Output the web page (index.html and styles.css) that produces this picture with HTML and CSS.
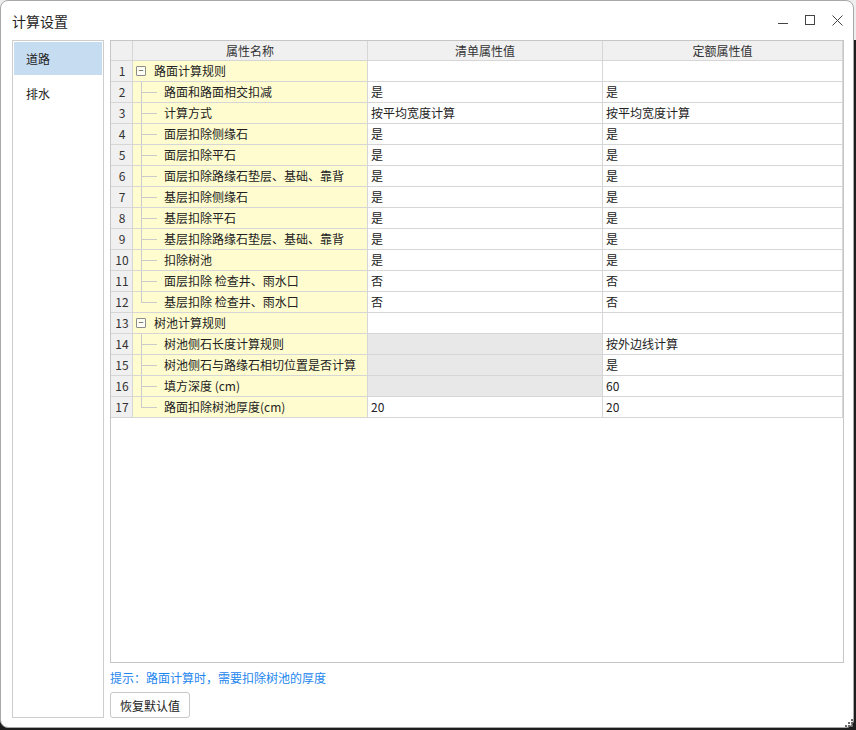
FILE: index.html
```html
<!DOCTYPE html>
<html lang="zh-CN">
<head>
<meta charset="utf-8">
<title>计算设置</title>
<link rel="stylesheet" href="styles.css">
</head>
<body>
<div class="window">
  <div class="titlebar">
    <span class="title">计算设置</span>
    <div class="controls">
      <svg class="ctl" width="10" height="10" viewBox="0 0 10 10"><line x1="0" y1="8.5" x2="10" y2="8.5" stroke="#444" stroke-width="1"/></svg>
      <svg class="ctl" width="10" height="10" viewBox="0 0 10 10"><rect x="0.5" y="0.5" width="9" height="9" fill="none" stroke="#444" stroke-width="1"/></svg>
      <svg class="ctl" width="11" height="11" viewBox="0 0 11 11"><path d="M0.5 0.5 L10.5 10.5 M10.5 0.5 L0.5 10.5" stroke="#444" stroke-width="1" fill="none"/></svg>
    </div>
  </div>
  <div class="content">
    <div class="sidebar">
      <div class="nav-item active">道路</div>
      <div class="nav-item">排水</div>
    </div>
    <div class="main">
      <div class="grid-box">
        <div class="row head">
          <div class="cell num"></div>
          <div class="cell hc">属性名称</div>
          <div class="cell hc">清单属性值</div>
          <div class="cell hc">定额属性值</div>
        </div>

        <div class="row">
          <div class="cell num">1</div>
          <div class="cell name"><span class="toggle">−</span><span class="gtext">路面计算规则</span></div>
          <div class="cell val"></div>
          <div class="cell val"></div>
        </div>
        <div class="row">
          <div class="cell num">2</div>
          <div class="cell name"><span class="branch"></span><span class="ctext">路面和路面相交扣减</span></div>
          <div class="cell val">是</div>
          <div class="cell val">是</div>
        </div>
        <div class="row">
          <div class="cell num">3</div>
          <div class="cell name"><span class="branch"></span><span class="ctext">计算方式</span></div>
          <div class="cell val">按平均宽度计算</div>
          <div class="cell val">按平均宽度计算</div>
        </div>
        <div class="row">
          <div class="cell num">4</div>
          <div class="cell name"><span class="branch"></span><span class="ctext">面层扣除侧缘石</span></div>
          <div class="cell val">是</div>
          <div class="cell val">是</div>
        </div>
        <div class="row">
          <div class="cell num">5</div>
          <div class="cell name"><span class="branch"></span><span class="ctext">面层扣除平石</span></div>
          <div class="cell val">是</div>
          <div class="cell val">是</div>
        </div>
        <div class="row">
          <div class="cell num">6</div>
          <div class="cell name"><span class="branch"></span><span class="ctext">面层扣除路缘石垫层、基础、靠背</span></div>
          <div class="cell val">是</div>
          <div class="cell val">是</div>
        </div>
        <div class="row">
          <div class="cell num">7</div>
          <div class="cell name"><span class="branch"></span><span class="ctext">基层扣除侧缘石</span></div>
          <div class="cell val">是</div>
          <div class="cell val">是</div>
        </div>
        <div class="row">
          <div class="cell num">8</div>
          <div class="cell name"><span class="branch"></span><span class="ctext">基层扣除平石</span></div>
          <div class="cell val">是</div>
          <div class="cell val">是</div>
        </div>
        <div class="row">
          <div class="cell num">9</div>
          <div class="cell name"><span class="branch"></span><span class="ctext">基层扣除路缘石垫层、基础、靠背</span></div>
          <div class="cell val">是</div>
          <div class="cell val">是</div>
        </div>
        <div class="row">
          <div class="cell num">10</div>
          <div class="cell name"><span class="branch"></span><span class="ctext">扣除树池</span></div>
          <div class="cell val">是</div>
          <div class="cell val">是</div>
        </div>
        <div class="row">
          <div class="cell num">11</div>
          <div class="cell name"><span class="branch"></span><span class="ctext">面层扣除 检查井、雨水口</span></div>
          <div class="cell val">否</div>
          <div class="cell val">否</div>
        </div>
        <div class="row">
          <div class="cell num">12</div>
          <div class="cell name"><span class="branch last"></span><span class="ctext">基层扣除 检查井、雨水口</span></div>
          <div class="cell val">否</div>
          <div class="cell val">否</div>
        </div>

        <div class="row">
          <div class="cell num">13</div>
          <div class="cell name"><span class="toggle">−</span><span class="gtext">树池计算规则</span></div>
          <div class="cell val"></div>
          <div class="cell val"></div>
        </div>
        <div class="row">
          <div class="cell num">14</div>
          <div class="cell name"><span class="branch"></span><span class="ctext">树池侧石长度计算规则</span></div>
          <div class="cell val disabled"></div>
          <div class="cell val">按外边线计算</div>
        </div>
        <div class="row">
          <div class="cell num">15</div>
          <div class="cell name"><span class="branch"></span><span class="ctext">树池侧石与路缘石相切位置是否计算</span></div>
          <div class="cell val disabled"></div>
          <div class="cell val">是</div>
        </div>
        <div class="row">
          <div class="cell num">16</div>
          <div class="cell name"><span class="branch"></span><span class="ctext">填方深度 (cm)</span></div>
          <div class="cell val disabled"></div>
          <div class="cell val">60</div>
        </div>
        <div class="row">
          <div class="cell num">17</div>
          <div class="cell name"><span class="branch last"></span><span class="ctext">路面扣除树池厚度(cm)</span></div>
          <div class="cell val">20</div>
          <div class="cell val">20</div>
        </div>
      </div>
      <div class="hint">提示：路面计算时，需要扣除树池的厚度</div>
      <div class="actions">
        <button class="btn" type="button">恢复默认值</button>
      </div>
    </div>
  </div>
  <svg class="grip" width="8" height="8" viewBox="0 0 8 8">
    <rect x="6" y="0" width="2" height="2" fill="#6a6a6a"/>
    <rect x="3" y="3" width="2" height="2" fill="#6a6a6a"/>
    <rect x="6" y="3" width="2" height="2" fill="#6a6a6a"/>
    <rect x="0" y="6" width="2" height="2" fill="#6a6a6a"/>
    <rect x="3" y="6" width="2" height="2" fill="#6a6a6a"/>
    <rect x="6" y="6" width="2" height="2" fill="#6a6a6a"/>
  </svg>
</div>
</body>
</html>
```

FILE: styles.css
```css
* {
  box-sizing: border-box;
}

html, body {
  margin: 0;
  padding: 0;
}

body {
  width: 856px;
  height: 730px;
  overflow: hidden;
  background: linear-gradient(#eeeeee 0, #eeeeee 40px, #1e1e1e 40px, #1e1e1e 100%);
  font-family: "Noto Sans CJK SC", "Microsoft YaHei", "Noto Sans", sans-serif;
  font-size: 12px;
  color: #222;
}

.window {
  position: relative;
  width: 854px;
  height: 728px;
  background: #ffffff;
  border: 1px solid #a8a8a8;
  border-radius: 8px;
  display: flex;
  flex-direction: column;
}

.titlebar {
  height: 39px;
  display: flex;
  align-items: center;
  justify-content: space-between;
  padding: 0 10px 0 11px;
}

.title {
  font-size: 14px;
  color: #1f1f1f;
  line-height: 20px;
}

.controls {
  display: flex;
  align-items: center;
  gap: 17px;
  margin-top: -1px;
}

.ctl {
  display: block;
}

.content {
  flex: 1;
  display: flex;
  gap: 6px;
  padding: 0 9px 9px 11px;
}

.sidebar {
  width: 92px;
  border: 1px solid #cdcdcd;
  padding: 1px;
  display: flex;
  flex-direction: column;
  gap: 2px;
}

.nav-item {
  height: 33px;
  line-height: 33px;
  padding-left: 12px;
  font-size: 12px;
  color: #222;
}

.nav-item.active {
  background: #c5dcf1;
}

.main {
  flex: 1;
  display: flex;
  flex-direction: column;
}

.grid-box {
  flex: 1;
  border: 1px solid #c6c6c6;
  background: #ffffff;
}

.row {
  display: grid;
  grid-template-columns: 22px 235px 235px 240px;
  height: 21px;
}

.row.head {
  height: 20px;
}

.cell {
  border-right: 1px solid #d6d6d6;
  border-bottom: 1px solid #d6d6d6;
  line-height: 20px;
  white-space: nowrap;
  overflow: hidden;
}

.head .cell {
  background: #f0f0f0;
  line-height: 19px;
}

.hc {
  text-align: center;
  color: #333;
}

.num {
  background: #f0f0f0;
  text-align: center;
  color: #333;
  padding-left: 1px;
}

.name {
  background: #fffdd0;
  display: flex;
  align-items: center;
  color: #222;
}

.toggle {
  width: 10px;
  height: 10px;
  margin-left: 3px;
  border: 1px solid #8c8c8c;
  border-radius: 1px;
  font-size: 9px;
  line-height: 8px;
  text-align: center;
  color: #333;
  background: #fffef5;
  flex: none;
}

.gtext {
  margin-left: 8px;
}

.branch {
  align-self: stretch;
  width: 16px;
  margin-left: 8px;
  border-left: 1px solid #cbcbcb;
  background: linear-gradient(#cbcbcb, #cbcbcb) no-repeat 0 10px / 100% 1px;
  flex: none;
}

.branch.last {
  align-self: flex-start;
  height: 11px;
  background-position: 0 10px;
}

.ctext {
  margin-left: 7px;
}

.val {
  padding: 0 3px;
  color: #222;
}

.val.disabled {
  background: #e8e8e8;
}

.hint {
  height: 29px;
  line-height: 29px;
  color: #1e86ee;
  font-size: 12px;
}

.actions {
  display: flex;
}

.btn {
  width: 80px;
  height: 26px;
  border: 1px solid #c8c8c8;
  border-radius: 3px;
  background: #ffffff;
  font-family: inherit;
  font-size: 12px;
  color: #222;
  padding: 0;
}

.grip {
  position: absolute;
  right: 0;
  bottom: 0;
}
```
